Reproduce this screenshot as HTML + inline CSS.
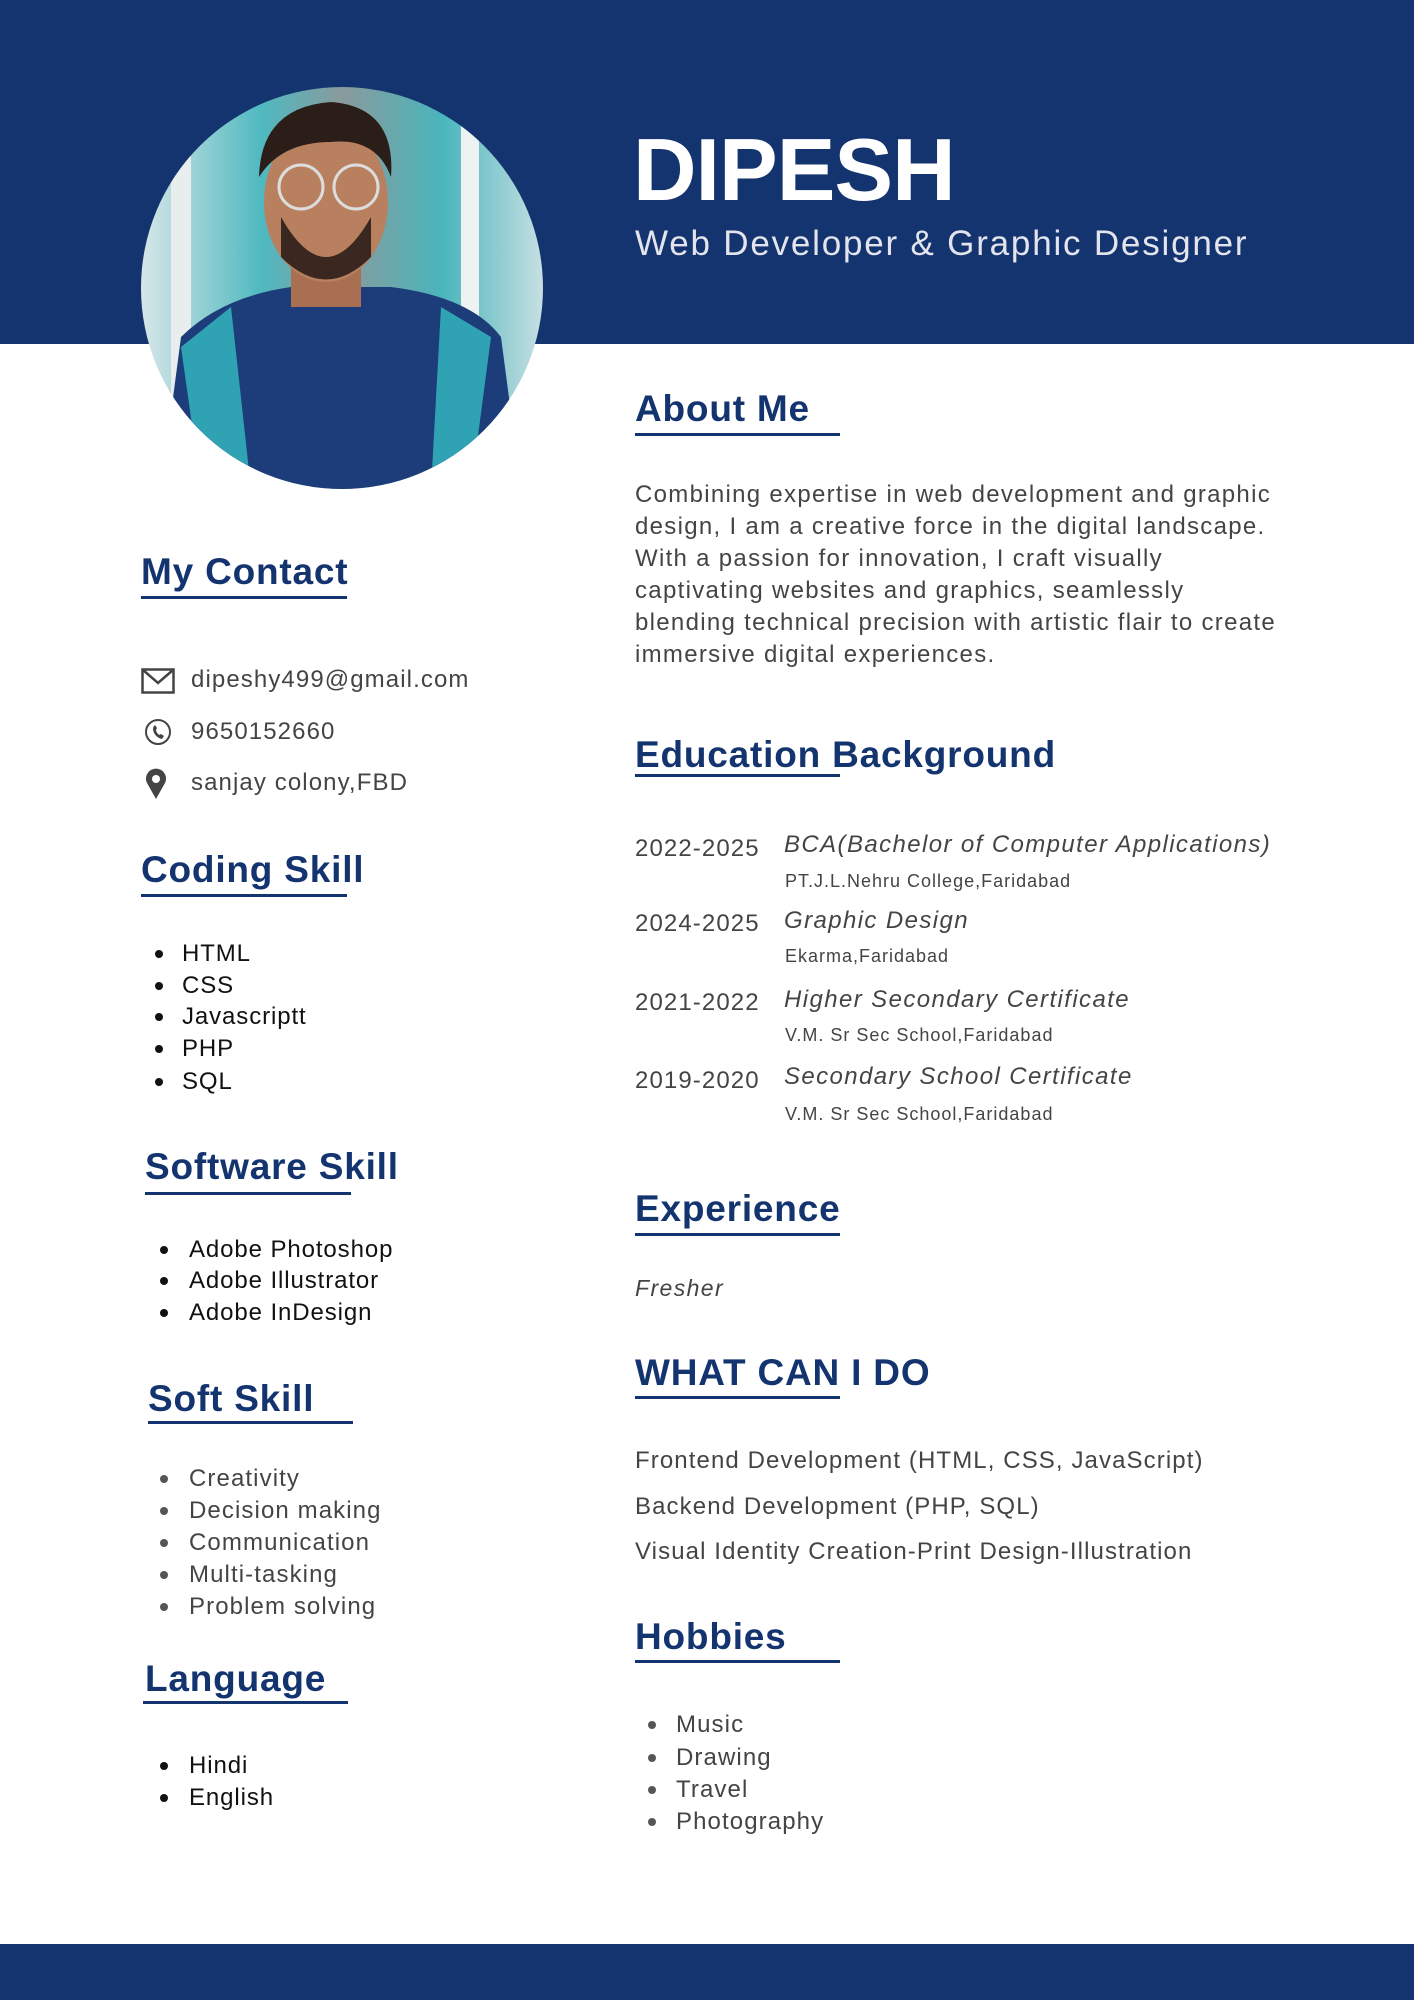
<!DOCTYPE html>
<html><head><meta charset="utf-8"><style>
*{margin:0;padding:0;box-sizing:border-box}
body{width:1414px;height:2000px;position:relative;background:#fff;font-family:"Liberation Sans",sans-serif;overflow:hidden}
.a{position:absolute;white-space:nowrap;line-height:30px;height:30px}
.hd{position:absolute;height:3px;background:#13346f}
h2{position:absolute;font-size:37px;font-weight:bold;color:#13346f;line-height:44px;white-space:nowrap;letter-spacing:0.8px}
.g{color:#444;font-size:24px;letter-spacing:1.1px}
.k{color:#111;font-size:24px;letter-spacing:0.9px}
.dot{position:absolute;width:8px;height:8px;border-radius:50%}
.it{font-style:italic;color:#444;font-size:24px;letter-spacing:1.4px}
.sm{font-size:18px;color:#444;letter-spacing:1px}
</style></head><body>
<div style="position:absolute;left:0;top:0;width:1414px;height:344px;background:#13346f"></div>
<div style="position:absolute;left:0;top:1944px;width:1414px;height:56px;background:#13346f"></div>

<svg style="position:absolute;left:141px;top:87px" width="402" height="402" viewBox="0 0 402 402">
<defs><clipPath id="c"><circle cx="201" cy="201" r="201"/></clipPath>
<linearGradient id="bg" x1="0" x2="1"><stop offset="0" stop-color="#d8e6e8"/><stop offset="0.3" stop-color="#4fb9c0"/><stop offset="0.5" stop-color="#8a9a9c"/><stop offset="0.75" stop-color="#49b5bc"/><stop offset="1" stop-color="#c7dfe2"/></linearGradient></defs>
<g clip-path="url(#c)">
<rect width="402" height="402" fill="url(#bg)"/>
<rect x="30" y="0" width="20" height="402" fill="#e8eeee"/>
<rect x="320" y="20" width="18" height="402" fill="#eef2f2"/>
<path d="M20 402 L40 250 Q80 210 150 200 L250 200 Q330 210 360 250 L380 402Z" fill="#1d3d7a"/>
<path d="M40 260 L90 220 L110 402 L60 402Z" fill="#2fa3b4"/>
<path d="M300 220 L350 250 L330 402 L290 402Z" fill="#2fa3b4"/>
<rect x="150" y="150" width="70" height="70" fill="#a86f52"/>
<ellipse cx="185" cy="115" rx="62" ry="80" fill="#b98060"/>
<path d="M140 130 Q185 210 230 130 L230 170 Q185 215 140 170Z" fill="#3a2820"/>
<path d="M118 90 Q120 20 190 15 Q255 20 250 90 Q235 50 190 55 Q140 55 118 90Z" fill="#2b1d18"/>
<circle cx="160" cy="100" r="22" fill="none" stroke="#ddd" stroke-width="3"/>
<circle cx="215" cy="100" r="22" fill="none" stroke="#ddd" stroke-width="3"/>
</g></svg>

<div class="a" style="left:633px;top:120px;height:100px;line-height:100px;font-size:88px;font-weight:bold;color:#fff;letter-spacing:-1px">DIPESH</div>
<div class="a" style="left:635px;top:222px;height:44px;line-height:44px;font-size:35px;color:#e4e4ee;letter-spacing:1.8px">Web Developer &amp; Graphic Designer</div>

<!-- left -->
<h2 style="left:141px;top:550px">My Contact</h2><div class="hd" style="left:141px;top:596px;width:206px"></div>
<svg style="position:absolute;left:141px;top:668px" width="34" height="26" viewBox="0 0 34 26"><rect x="1.5" y="1.5" width="31" height="23" fill="none" stroke="#444" stroke-width="2.5"/><path d="M2 2 L17 15 L32 2" fill="none" stroke="#444" stroke-width="2.5"/></svg>
<div class="a g" style="left:191px;top:665px">dipeshy499@gmail.com</div>
<svg style="position:absolute;left:144px;top:718px" width="28" height="28" viewBox="0 0 28 28"><circle cx="14" cy="14" r="12" fill="none" stroke="#444" stroke-width="2"/><path d="M10 8 Q8 10 10 15 Q13 20 18 21 L20 18 L17 16 L15 17 Q12 14 12 12 L13 10 L11 7Z" fill="#444"/></svg>
<div class="a g" style="left:191px;top:717px">9650152660</div>
<svg style="position:absolute;left:145px;top:768px" width="22" height="32" viewBox="0 0 22 32"><path d="M11 31 L2 15 A10 10 0 1 1 20 15Z" fill="#444"/><circle cx="11" cy="11" r="4" fill="#fff"/></svg>
<div class="a g" style="left:191px;top:768px">sanjay colony,FBD</div>

<h2 style="left:141px;top:848px">Coding Skill</h2><div class="hd" style="left:141px;top:894px;width:206px"></div>
<div class="dot" style="left:155px;top:950px;background:#111"></div><div class="a k" style="left:182px;top:939px">HTML</div>
<div class="dot" style="left:155px;top:982px;background:#111"></div><div class="a k" style="left:182px;top:971px">CSS</div>
<div class="dot" style="left:155px;top:1013px;background:#111"></div><div class="a k" style="left:182px;top:1002px">Javascriptt</div>
<div class="dot" style="left:155px;top:1045px;background:#111"></div><div class="a k" style="left:182px;top:1034px">PHP</div>
<div class="dot" style="left:155px;top:1078px;background:#111"></div><div class="a k" style="left:182px;top:1067px">SQL</div>

<h2 style="left:145px;top:1145px">Software Skill</h2><div class="hd" style="left:145px;top:1192px;width:206px"></div>
<div class="dot" style="left:160px;top:1246px;background:#111"></div><div class="a k" style="left:189px;top:1235px">Adobe Photoshop</div>
<div class="dot" style="left:160px;top:1277px;background:#111"></div><div class="a k" style="left:189px;top:1266px">Adobe Illustrator</div>
<div class="dot" style="left:160px;top:1309px;background:#111"></div><div class="a k" style="left:189px;top:1298px">Adobe InDesign</div>

<h2 style="left:148px;top:1377px">Soft Skill</h2><div class="hd" style="left:148px;top:1421px;width:205px"></div>
<div class="dot" style="left:160px;top:1475px;background:#555"></div><div class="a g" style="left:189px;top:1464px">Creativity</div>
<div class="dot" style="left:160px;top:1507px;background:#555"></div><div class="a g" style="left:189px;top:1496px">Decision making</div>
<div class="dot" style="left:160px;top:1539px;background:#555"></div><div class="a g" style="left:189px;top:1528px">Communication</div>
<div class="dot" style="left:160px;top:1571px;background:#555"></div><div class="a g" style="left:189px;top:1560px">Multi-tasking</div>
<div class="dot" style="left:160px;top:1603px;background:#555"></div><div class="a g" style="left:189px;top:1592px">Problem solving</div>

<h2 style="left:145px;top:1657px">Language</h2><div class="hd" style="left:143px;top:1701px;width:205px"></div>
<div class="dot" style="left:160px;top:1762px;background:#111"></div><div class="a k" style="left:189px;top:1751px">Hindi</div>
<div class="dot" style="left:160px;top:1794px;background:#111"></div><div class="a k" style="left:189px;top:1783px">English</div>

<!-- right -->
<h2 style="left:635px;top:387px">About Me</h2><div class="hd" style="left:635px;top:433px;width:205px"></div>
<div style="position:absolute;left:635px;top:479px;width:760px;font-size:24px;line-height:32px;color:#444;letter-spacing:1.3px;white-space:nowrap">Combining expertise in web development and graphic<br>design, I am a creative force in the digital landscape.<br>With a passion for innovation, I craft visually<br>captivating websites and graphics, seamlessly<br>blending technical precision with artistic flair to create<br>immersive digital experiences.</div>

<h2 style="left:635px;top:733px">Education Background</h2><div class="hd" style="left:635px;top:774px;width:205px"></div>
<div class="a g" style="left:635px;top:834px">2022-2025</div>
<div class="a it" style="left:784px;top:830px">BCA(Bachelor of Computer Applications)</div>
<div class="a sm" style="left:785px;top:866px">PT.J.L.Nehru College,Faridabad</div>
<div class="a g" style="left:635px;top:909px">2024-2025</div>
<div class="a it" style="left:784px;top:906px">Graphic Design</div>
<div class="a sm" style="left:785px;top:941px">Ekarma,Faridabad</div>
<div class="a g" style="left:635px;top:988px">2021-2022</div>
<div class="a it" style="left:784px;top:985px">Higher Secondary Certificate</div>
<div class="a sm" style="left:785px;top:1020px">V.M. Sr Sec School,Faridabad</div>
<div class="a g" style="left:635px;top:1066px">2019-2020</div>
<div class="a it" style="left:784px;top:1062px">Secondary School Certificate</div>
<div class="a sm" style="left:785px;top:1099px">V.M. Sr Sec School,Faridabad</div>

<h2 style="left:635px;top:1187px">Experience</h2><div class="hd" style="left:635px;top:1233px;width:205px"></div>
<div class="a it" style="left:635px;top:1273px;font-size:23px">Fresher</div>

<h2 style="left:635px;top:1351px">WHAT CAN I DO</h2><div class="hd" style="left:635px;top:1396px;width:205px"></div>
<div class="a g" style="left:635px;top:1446px">Frontend Development (HTML, CSS, JavaScript)</div>
<div class="a g" style="left:635px;top:1492px">Backend Development (PHP, SQL)</div>
<div class="a g" style="left:635px;top:1537px">Visual Identity Creation-Print Design-Illustration</div>

<h2 style="left:635px;top:1615px">Hobbies</h2><div class="hd" style="left:635px;top:1660px;width:205px"></div>
<div class="dot" style="left:648px;top:1721px;background:#555"></div><div class="a g" style="left:676px;top:1710px">Music</div>
<div class="dot" style="left:648px;top:1754px;background:#555"></div><div class="a g" style="left:676px;top:1743px">Drawing</div>
<div class="dot" style="left:648px;top:1786px;background:#555"></div><div class="a g" style="left:676px;top:1775px">Travel</div>
<div class="dot" style="left:648px;top:1818px;background:#555"></div><div class="a g" style="left:676px;top:1807px">Photography</div>
</body></html>
